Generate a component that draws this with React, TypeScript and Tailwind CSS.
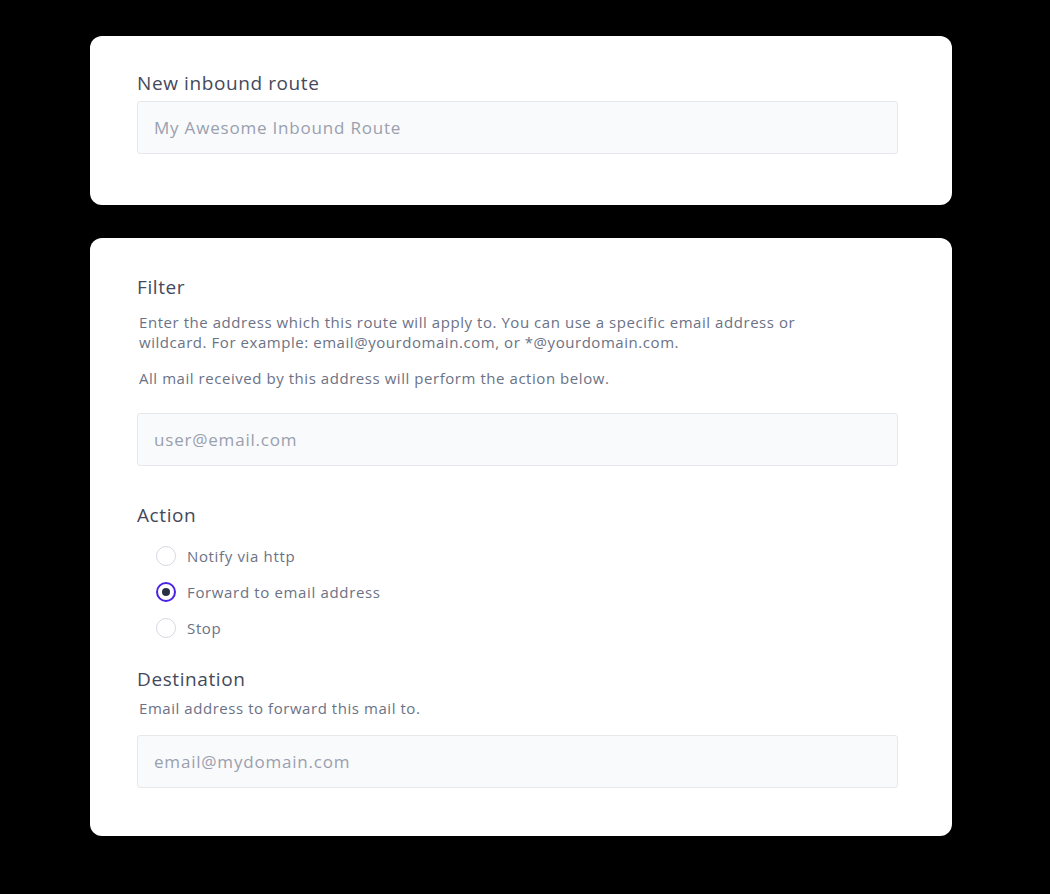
import React from "react";

const font = { fontFamily: '"Open Sans", "Noto Sans", sans-serif' };

function Input({ placeholder }: { placeholder: string }) {
  return (
    <input
      placeholder={placeholder}
      className="w-[761px] h-[53px] rounded-[3px] border border-[#e6e8ec] bg-[#f9fafc] px-4 text-[17px] tracking-[0.8px] text-[#3c4257] placeholder:text-[#9aa0ae] outline-none"
    />
  );
}

function Radio({ label, checked }: { label: string; checked?: boolean }) {
  return (
    <label className="flex items-center h-[36px] gap-[11px]">
      {checked ? (
        <span className="w-[20px] h-[20px] rounded-full border-2 border-[#4b23e6] flex items-center justify-center bg-white">
          <span className="w-[8px] h-[8px] rounded-full bg-[#2b2f45]" />
        </span>
      ) : (
        <span className="w-[20px] h-[20px] rounded-full border border-[#d6d9e0] bg-white" />
      )}
      <span className="text-[15px] tracking-[0.65px] text-[#6b7286] font-medium">{label}</span>
    </label>
  );
}

export default function App() {
  return (
    <div className="min-h-[894px] w-[1050px] bg-black pt-[36px] pl-[90px]" style={font}>
      <div className="w-[862px] bg-white rounded-[12px] pl-[47px] pt-[29px] pb-[51px]">
        <div className="text-[19px] tracking-[0.6px] text-[#44495b] leading-[36px] font-medium">New inbound route</div>
        <Input placeholder="My Awesome Inbound Route" />
      </div>
      <div className="w-[862px] bg-white rounded-[12px] pl-[47px] pt-[34px] pb-[48px] mt-[33px]">
        <div className="text-[19px] tracking-[0.6px] text-[#44495b] leading-[30px] font-medium">Filter</div>
        <div className="mt-[10px] text-[15px] tracking-[0.55px] leading-[20px] text-[#6b7286] font-medium pl-[2px]">
          <p className="w-[700px]">
            Enter the address which this route will apply to. You can use a specific email address or wildcard. For example: email@yourdomain.com, or *@yourdomain.com.
          </p>
          <p className="mt-[16px]">All mail received by this address will perform the action below.</p>
        </div>
        <div className="mt-[25px]">
          <Input placeholder="user@email.com" />
        </div>
        <div className="mt-[34px] text-[19px] tracking-[0.6px] text-[#44495b] leading-[30px] font-medium">Action</div>
        <div className="mt-[8px] pl-[19px] flex flex-col">
          <Radio label="Notify via http" />
          <Radio label="Forward to email address" checked />
          <Radio label="Stop" />
        </div>
        <div className="mt-[18px] text-[19px] tracking-[0.6px] text-[#44495b] leading-[30px] font-medium">Destination</div>
        <div className="mt-[4px] text-[15px] tracking-[0.55px] leading-[20px] text-[#6b7286] font-medium pl-[2px]">Email address to forward this mail to.</div>
        <div className="mt-[17px]">
          <Input placeholder="email@mydomain.com" />
        </div>
      </div>
    </div>
  );
}
